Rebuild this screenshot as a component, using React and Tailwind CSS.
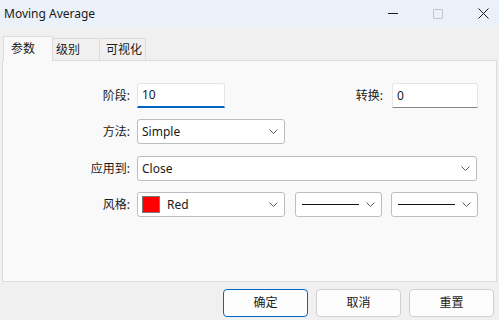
const font = { fontFamily: '"Noto Sans", "Noto Sans CJK SC", sans-serif' }

const Chevron = () => (
  <svg width="9" height="5" viewBox="0 0 9 5" className="shrink-0">
    <path d="M0.5 0.5 L4.5 4.5 L8.5 0.5" fill="none" stroke="#5c5c5c" strokeWidth="1" />
  </svg>
)

const Select = ({ className, children }) => (
  <div className={`flex h-[25px] items-center rounded-[3px] border border-[#bdbdbd] bg-white pl-[4px] pr-[6px] ${className}`}>
    <div className="flex flex-1 items-center">{children}</div>
    <Chevron />
  </div>
)

const Label = ({ className, children }) => (
  <div className={`text-right text-[12px] text-[#1a1a1a] ${className}`}>{children}</div>
)

const App = () => {
  return (
    <div className="flex h-[320px] w-[499px] flex-col overflow-hidden bg-[#f0f0f0]" style={font}>
      {/* title bar */}
      <div className="flex h-[27px] items-center bg-[#eaf1f8] pl-[4px]">
        <span className="text-[12px] text-[#1a1a1a]">Moving Average</span>
        <div className="ml-auto flex items-center gap-[35px] pr-[10px]">
          <div className="h-px w-[10px] bg-[#1a1a1a]" />
          <div className="h-[10px] w-[10px] rounded-[1px] border border-[#c2c6ca]" />
          <svg width="11" height="11" viewBox="0 0 11 11">
            <path d="M0.5 0.5 L10.5 10.5 M10.5 0.5 L0.5 10.5" stroke="#1a1a1a" strokeWidth="1" />
          </svg>
        </div>
      </div>

      {/* tabs */}
      <div className="mt-[9px] flex items-end pl-[3px]">
        <div className="relative z-10 -mb-px flex h-[25px] w-[50px] items-center border border-b-0 border-[#dcdcdc] bg-[#f9f9f9] pl-[7px] text-[12px] text-[#1a1a1a]">
          参数
        </div>
        <div className="flex h-[22px] w-[47px] items-center border border-l-0 border-b-0 border-[#dcdcdc] bg-[#f0f0f0] pl-[3px] text-[12px] text-[#1a1a1a]">
          级别
        </div>
        <div className="flex h-[22px] w-[46px] items-center border border-l-0 border-b-0 border-[#dcdcdc] bg-[#f0f0f0] pl-[6px] text-[12px] text-[#1a1a1a]">
          可视化
        </div>
      </div>

      {/* panel */}
      <div className="mx-[2px] h-[222px] border border-[#dcdcdc] bg-[#f9f9f9] pt-[22px]">
        <div className="flex h-[25px] items-center">
          <Label className="w-[127px]">阶段:</Label>
          <div className="ml-[7px] flex h-[25px] w-[88px] items-center rounded-t-[3px] border border-b-2 border-[#e5e5e5] border-b-[#0067c0] bg-white pl-[4px] text-[12px] text-[#1a1a1a]">
            10
          </div>
          <Label className="w-[158px]">转换:</Label>
          <div className="ml-[9px] flex h-[25px] w-[86px] items-center rounded-t-[3px] border border-[#e5e5e5] border-b-[#868686] bg-white pl-[4px] text-[12px] text-[#1a1a1a]">
            0
          </div>
        </div>

        <div className="mt-[11px] flex items-center">
          <Label className="w-[127px]">方法:</Label>
          <Select className="ml-[7px] w-[148px]">
            <span className="text-[12px] text-[#1a1a1a]">Simple</span>
          </Select>
        </div>

        <div className="mt-[12px] flex items-center">
          <Label className="w-[127px]">应用到:</Label>
          <Select className="ml-[7px] w-[340px]">
            <span className="text-[12px] text-[#1a1a1a]">Close</span>
          </Select>
        </div>

        <div className="mt-[11px] flex items-center">
          <Label className="w-[127px]">风格:</Label>
          <Select className="ml-[7px] w-[148px]">
            <div className="h-[17px] w-[18px] border border-[#7a7a7a] bg-[#ff0000]" />
            <span className="ml-[7px] text-[12px] text-[#1a1a1a]">Red</span>
          </Select>
          <Select className="ml-[10px] w-[87px]">
            <div className="ml-[2px] h-px w-[57px] bg-[#111]" />
          </Select>
          <Select className="ml-[9px] w-[87px]">
            <div className="ml-[2px] h-px w-[57px] bg-[#111]" />
          </Select>
        </div>
      </div>

      {/* buttons */}
      <div className="mt-[7px] flex justify-end gap-[8px] pr-[5px]">
        <button className="h-[28px] w-[85px] rounded-[4px] border border-[#0067c0] bg-[#fdfdfd] text-[12px] text-[#1a1a1a]">
          确定
        </button>
        <button className="h-[28px] w-[85px] rounded-[4px] border border-[#d0d0d0] bg-[#fdfdfd] text-[12px] text-[#1a1a1a]">
          取消
        </button>
        <button className="h-[28px] w-[85px] rounded-[4px] border border-[#d0d0d0] bg-[#fdfdfd] text-[12px] text-[#1a1a1a]">
          重置
        </button>
      </div>
    </div>
  )
}

export default App
